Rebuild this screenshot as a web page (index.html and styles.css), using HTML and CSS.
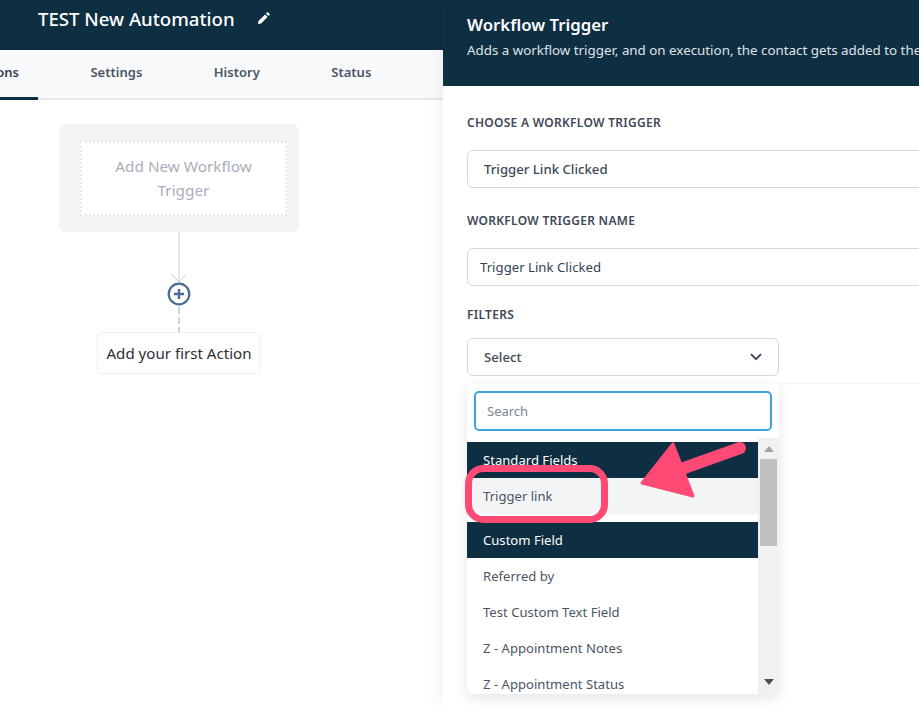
FILE: index.html
```html
<!DOCTYPE html>
<html lang="en">
<head>
<meta charset="utf-8">
<title>Workflow Trigger</title>
<link rel="stylesheet" href="styles.css">
</head>
<body>
<div class="page">
  <main class="builder">
    <header class="topbar">
      <h1 class="topbar-title">TEST New Automation</h1>
      <svg class="pencil" width="13" height="13" viewBox="0 0 14 14" aria-hidden="true"><path d="M1 13l.6-3.4 7-7 2.8 2.8-7 7L1 13zM9.6 1.6l1-1a1 1 0 0 1 1.4 0l1.4 1.4a1 1 0 0 1 0 1.4l-1 1-2.8-2.8z" fill="#fff"/></svg>
    </header>
    <nav class="tabs">
      <a class="tab tab-active">Actions</a>
      <a class="tab">Settings</a>
      <a class="tab">History</a>
      <a class="tab">Status</a>
    </nav>
    <section class="canvas">
      <div class="flow">
        <div class="trigger-card">
          <div class="trigger-slot">Add New Workflow Trigger</div>
        </div>
        <svg class="connector" width="24" height="100" viewBox="0 0 24 100" aria-hidden="true">
          <path d="M12 0V50" stroke="#ccd0dc" stroke-width="1" fill="none"/>
          <path d="M4.5 42L12 50l7.5-8" stroke="#ccd0dc" stroke-width="1" fill="none"/>
          <circle cx="12" cy="62" r="10.3" fill="#fff" stroke="#4a6b94" stroke-width="2.2"/>
          <path d="M12 57v10M7 62h10" stroke="#4a6b94" stroke-width="2.4"/>
          <path d="M12 75V100" stroke="#ccd0dc" stroke-width="2" stroke-dasharray="7 3" fill="none"/>
        </svg>
        <div class="action-box">Add your first Action</div>
      </div>
    </section>
  </main>
  <aside class="panel">
    <header class="panel-head">
      <h2 class="panel-title">Workflow Trigger</h2>
      <p class="panel-sub">Adds a workflow trigger, and on execution, the contact gets added to the workflow.</p>
    </header>
    <div class="panel-body">
      <label class="field-label">Choose a workflow trigger</label>
      <div class="control control-wide control-strong">Trigger Link Clicked</div>
      <label class="field-label field-label-2">Workflow trigger name</label>
      <div class="control control-wide control-input">Trigger Link Clicked</div>
      <label class="field-label field-label-3">Filters</label>
      <div class="filter-wrap">
        <div class="control control-select control-strong">
          <span>Select</span>
          <svg width="12" height="8" viewBox="0 0 12 8" aria-hidden="true"><path d="M1 1.2l5 5 5-5" stroke="#3f4858" stroke-width="1.9" fill="none"/></svg>
        </div>
      </div>
      <div class="filter-rule"></div>
    </div>
    <div class="dropdown">
      <div class="search-row"><div class="search">Search</div></div>
      <div class="list-wrap">
        <ul class="list">
          <li class="group">Standard Fields</li>
          <li class="item item-hover">Trigger link</li>
          <li class="group group-gap">Custom Field</li>
          <li class="item">Referred by</li>
          <li class="item">Test Custom Text Field</li>
          <li class="item">Z - Appointment Notes</li>
          <li class="item">Z - Appointment Status</li>
        </ul>
        <div class="scrollbar">
          <svg class="scroll-arrow" width="10" height="6" viewBox="0 0 10 6" aria-hidden="true"><path d="M5 0l5 6H0z" fill="#a3a3a3"/></svg>
          <div class="scroll-thumb"></div>
          <svg class="scroll-arrow scroll-arrow-end" width="10" height="6" viewBox="0 0 10 6" aria-hidden="true"><path d="M0 0h10L5 6z" fill="#505050"/></svg>
        </div>
      </div>
    </div>
  </aside>
  <svg class="annotation" width="300" height="100" viewBox="0 0 300 100" aria-hidden="true">
    <rect x="3.5" y="3.5" width="136" height="51" rx="15" fill="none" stroke="#ff4a75" stroke-width="7"/>
    <path d="M208 -21 L177 18 L228 31 Z" fill="#ff4a75" stroke="#ff4a75" stroke-width="3" stroke-linejoin="round"/>
    <path d="M205 8 L275 -17" stroke="#ff4a75" stroke-width="12" stroke-linecap="round"/>
  </svg>
</div>
</body>
</html>
```
FILE: styles.css
```css
* { box-sizing: border-box; }
html, body { margin: 0; height: 100%; overflow: hidden; background: #fff; }
body { font-family: "Noto Sans", "Open Sans", sans-serif; color: #3f4858; }
.page { position: relative; display: flex; width: 919px; height: 707px; overflow: hidden; }

.builder { width: 443px; flex: none; background: #fff; }
.topbar { height: 50px; background: #0e2e42; display: flex; align-items: center; gap: 22px; padding: 0 0 13px 38px; }
.topbar-title { margin: 0; font-size: 18.6px; font-weight: 500; color: #fff; white-space: nowrap; }
.pencil { flex: none; margin-top: -1px; }

.tabs { height: 50px; display: flex; background: #f9fafb; margin-left: -47px; border-bottom: 2px solid #e5e7eb; }
.tab { height: 50px; padding: 13px 19px 0; margin-right: 33.5px; font-size: 13px; font-weight: 600; color: #4b5563; }
.tab-active { border-bottom: 3px solid #0e2e42; color: #374151; }

.canvas { padding: 24px 0 0 59px; }
.flow { width: 240px; display: flex; flex-direction: column; align-items: center; }
.trigger-card { width: 240px; height: 108px; padding: 17px 12px 16px 21px; background: #f3f4f6; border-radius: 7px; }
.trigger-slot { height: 75px; display: flex; align-items: center; justify-content: center; text-align: center; padding: 0 25px 2px; background: #fff; border: 2px dotted #e5e7eb; font-size: 15.3px; line-height: 24px; color: #a9aebb; }
.connector { display: block; flex: none; }
.action-box { width: 164px; height: 42px; display: flex; align-items: center; justify-content: center; border: 1px solid #f0f1f4; border-radius: 3px; font-size: 15.1px; color: #2f2f33; white-space: nowrap; }

.panel { position: relative; flex: none; width: 640px; background: #fff; box-shadow: -6px 0 16px rgba(0,0,0,.045); }
.panel-head { height: 86px; padding: 14px 24px 0; background: #0e2e42; color: #fff; }
.panel-title { margin: 0; font-size: 16.8px; line-height: 22px; font-weight: 600; }
.panel-sub { margin: 5px 0 0; font-size: 13.35px; line-height: 18px; color: #dfe3e8; white-space: nowrap; }

.panel-body { padding: 28px 0 0 24px; }
.field-label { display: block; height: 18px; font-size: 12px; line-height: 18px; font-weight: 600; letter-spacing: .28px; color: #3f4858; text-transform: uppercase; }
.field-label-2 { margin-top: 24px; }
.field-label-3 { margin-top: 20px; height: 16px; }
.control { height: 38px; display: flex; align-items: center; font-size: 13.2px; background: #fff; border: 1px solid #d5d7e3; border-radius: 6px; }
.control-wide { width: 600px; margin-top: 18px; }
.control-strong { padding-left: 16px; font-weight: 500; color: #3f4858; }
.control-input { padding-left: 12px; color: #374151; }
.filter-wrap { margin-top: 16px; }
.control-select { width: 312px; justify-content: space-between; padding-right: 16px; }
.filter-rule { height: 8px; margin-left: 312px; border-bottom: 1px solid #f5f5f6; }

.dropdown { position: absolute; left: 24px; top: 384px; width: 312px; height: 310px; background: #fff; border-radius: 0 0 6px 6px; box-shadow: 0 4px 14px rgba(0,0,0,.1); overflow: hidden; }
.search-row { padding: 7px 7px 0; height: 54px; }
.search { height: 40px; padding: 0 11px; display: flex; align-items: center; border: 2px solid #3ea2dd; border-radius: 5px; font-size: 13px; color: #7a8494; }
.list-wrap { display: flex; height: 256px; }
.list { flex: 1; margin: 4px 0 0; padding: 0; list-style: none; overflow: hidden; }
.group { height: 36px; padding-left: 16px; display: flex; align-items: center; background: #0e2e42; color: #fff; font-size: 13.1px; }
.group-gap { margin-top: 8px; }
.item { height: 36px; padding-left: 16px; display: flex; align-items: center; font-size: 13.1px; color: #4b5563; }
.item-hover { background: #f3f4f6; }
.scrollbar { position: relative; width: 21px; flex: none; background: #f1f1f1; padding: 0 2px; }
.scroll-arrow { position: absolute; left: 6px; top: 8px; display: block; }
.scroll-arrow-end { top: auto; bottom: 9px; }
.scroll-thumb { height: 87px; margin-top: 21px; background: #c1c1c1; }

.annotation { position: absolute; left: 465px; top: 465px; overflow: visible; pointer-events: none; }
```
